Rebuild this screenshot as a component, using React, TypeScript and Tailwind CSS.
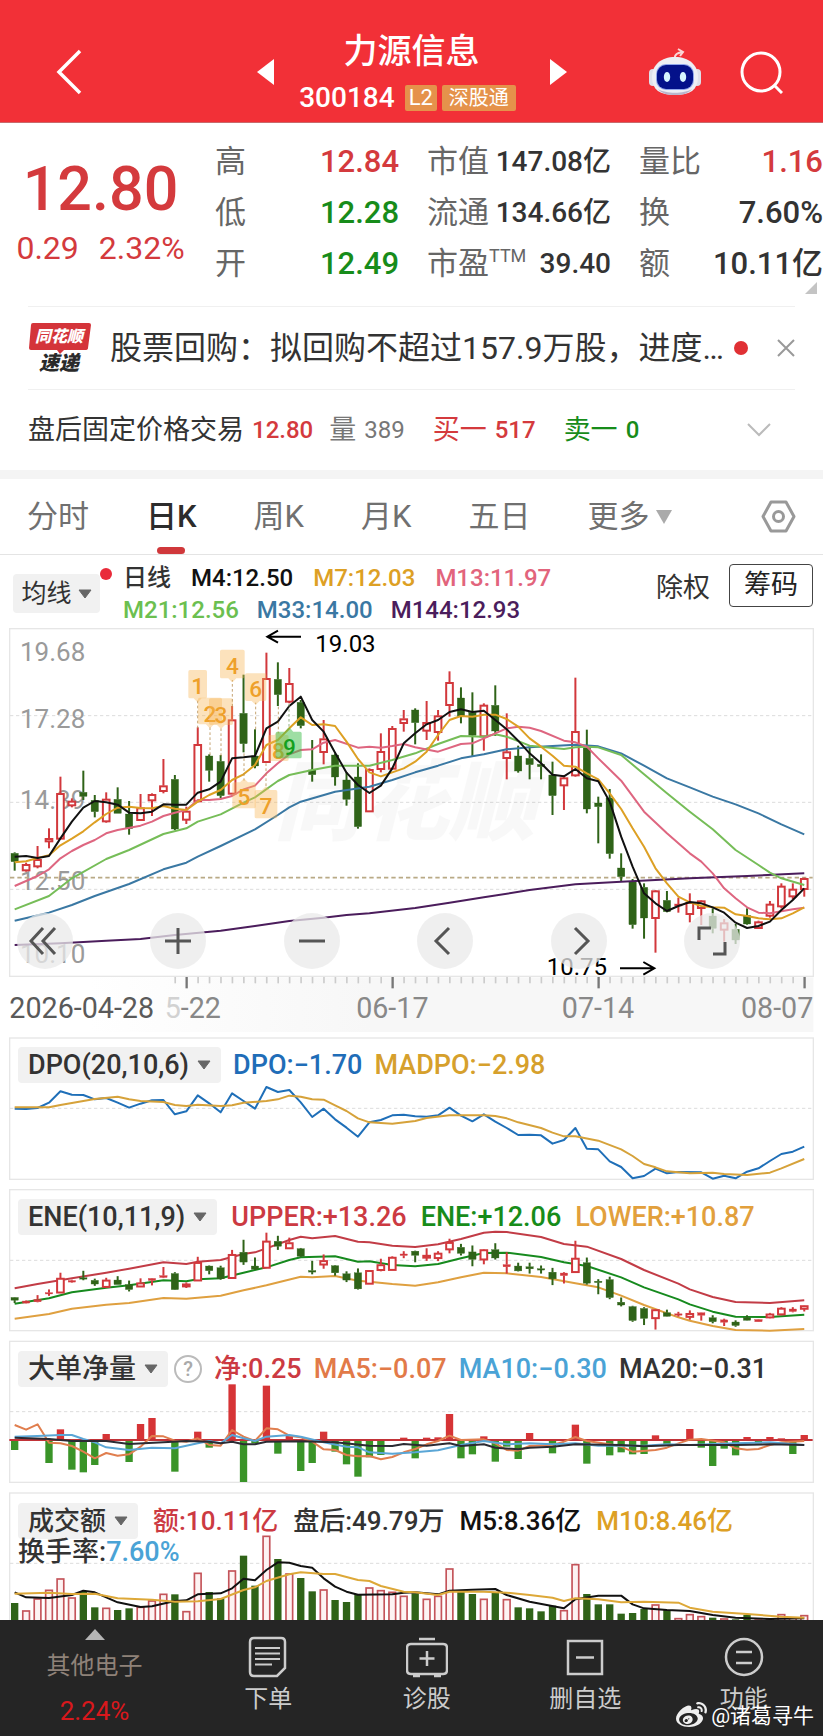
import React from "react";
import { FaWeibo } from "react-icons/fa";

/* All chart drawings share one coordinate system: 2469 units wide, 3 units per CSS pixel at 823px. */
const STEP = 34.33;
const cx = (i: number) => 44 + STEP * i;

type Candle = ["r" | "g", number, number, number, number];

// [direction, high, body top, body bottom, low]
const candles: Candle[] = [
  ["g", 697, 700, 725, 752], ["r", 728, 733, 752, 755], ["r", 678, 718, 740, 745], ["r", 625, 655, 665, 685],
  ["r", 470, 520, 657, 657], ["r", 535, 543, 557, 562], ["g", 452, 517, 529, 540], ["g", 525, 541, 575, 592],
  ["r", 517, 537, 605, 608], ["g", 502, 538, 580, 580], ["g", 543, 582, 626, 644], ["r", 522, 563, 601, 603],
  ["r", 520, 523, 542, 588], ["r", 417, 497, 514, 520], ["g", 465, 478, 627, 630], ["r", 560, 573, 600, 612],
  ["r", 322, 373, 545, 545], ["g", 403, 408, 451, 485], ["g", 405, 424, 527, 535], ["r", 258, 299, 522, 522],
  ["g", 164, 280, 371, 397], ["g", 328, 408, 438, 445], ["r", 98, 175, 427, 427], ["g", 127, 178, 224, 258],
  ["r", 144, 190, 246, 250], ["g", 240, 247, 317, 325], ["g", 360, 450, 464, 485], ["r", 300, 356, 397, 433],
  ["g", 400, 405, 471, 497], ["g", 457, 480, 538, 557], ["g", 430, 471, 620, 626], ["r", 445, 448, 575, 575],
  ["r", 340, 394, 448, 457], ["r", 318, 325, 447, 447], ["r", 270, 296, 310, 335], ["g", 265, 270, 308, 373],
  ["r", 243, 307, 333, 360], ["r", 270, 287, 337, 362], ["r", 154, 187, 256, 290], ["g", 202, 234, 290, 310],
  ["g", 217, 277, 346, 410], ["r", 250, 255, 350, 392], ["g", 196, 256, 333, 348], ["r", 280, 395, 415, 478],
  ["g", 377, 408, 453, 458], ["g", 377, 415, 434, 478], ["g", 403, 433, 440, 478], ["g", 425, 465, 527, 585],
  ["r", 465, 473, 497, 570], ["r", 173, 334, 467, 470], ["g", 329, 377, 567, 580], ["g", 530, 549, 560, 670],
  ["g", 507, 534, 701, 716], ["g", 700, 744, 770, 783], ["g", 777, 785, 914, 926], ["g", 790, 802, 894, 956],
  ["r", 810, 812, 895, 998], ["g", 813, 841, 875, 877], ["r", 833, 852, 858, 878], ["r", 820, 847, 883, 907],
  ["r", 840, 842, 865, 915], ["g", 865, 888, 925, 940], ["r", 897, 908, 930, 965], ["g", 912, 928, 960, 972],
  ["g", 865, 886, 912, 914], ["r", 902, 905, 925, 927], ["r", 843, 852, 888, 893], ["r", 790, 798, 860, 865],
  ["r", 790, 807, 830, 838], ["r", 773, 775, 808, 830],
];

// Series are "index:y" pairs; missing indexes are joined by straight segments.
const M4 = "0:710 1:708 2:714 3:708 4:655 5:605 6:563 7:543 8:547 9:554 10:578 11:580 12:575 13:553 14:554 15:554 16:518 17:508 18:485 19:415 20:412 21:408 22:325 23:305 24:258 25:230 26:300 27:335 28:398 29:458 30:495 31:519 32:497 33:445 34:370 35:340 36:313 37:300 38:276 39:268 40:276 41:272 42:300 43:328 44:362 45:400 46:430 47:464 48:469 49:447 50:475 51:484 52:545 53:650 54:740 55:820 56:850 57:873 58:858 59:846 60:850 61:862 62:878 63:908 64:924 65:918 66:905 67:870 68:840 69:805";
const M7 = "0:727 1:724 2:714 3:706 4:676 5:656 6:634 7:607 8:582 9:563 10:560 11:564 12:565 13:558 14:566 15:570 16:545 17:525 18:510 19:480 20:463 21:435 22:375 23:360 24:325 25:292 26:315 27:313 28:318 29:365 30:417 31:457 32:469 33:457 34:445 35:425 36:395 37:345 38:300 39:288 40:290 41:284 42:284 43:297 44:320 45:355 46:380 47:407 48:437 49:440 50:460 51:478 52:520 53:567 54:625 55:680 56:745 57:790 58:830 59:847 60:858 61:862 62:863 63:883 64:888 65:895 66:898 67:895 68:880 69:862";
const M13 = "0:798 2:768 3:748 4:715 5:693 6:675 7:660 8:640 9:630 11:617 12:605 13:588 14:578 15:570 16:540 17:540 18:537 19:528 20:508 21:497 22:460 23:430 24:403 25:390 26:388 27:368 28:360 30:383 31:380 32:383 33:378 34:372 35:382 37:395 39:372 40:370 41:355 42:340 43:325 44:320 45:323 46:333 48:362 49:367 50:380 51:415 53:482 55:575 57:640 59:700 60:725 61:760 62:805 63:835 64:862 65:878 66:880 68:868 69:863";
const M21 = "0:868 3:828 5:775 8:717 10:690 13:642 15:625 16:605 18:583 20:548 21:532 23:483 24:465 26:450 28:437 31:437 33:420 35:400 37:372 39:348 41:350 42:343 43:350 45:377 48:387 49:382 50:380 51:382 53:405 55:463 57:520 59:575 61:628 63:690 65:735 66:758 67:775 69:795";
const M33 = "0:902 3:878 5:855 7:828 10:792 13:748 15:728 16:710 18:678 21:628 23:585 24:562 25:545 28:515 31:500 33:480 35:457 37:437 39:415 41:403 43:388 45:382 47:378 49:374 51:379 53:400 55:437 57:475 59:502 61:530 63:553 65:580 67:613 69:643";
const M144 = "0:975 4:970 8:962 11:957 14:945 18:932 21:918 24:903 27:893 29:885 31:880 35:864 38:848 41:832 45:810 49:793 53:785 59:775 64:768 69:760";

const DPO = "0:236 1:237 2:234 3:218 4:184 5:194 6:195 7:208 8:204 9:218 10:233 11:221 12:211 13:210 14:253 15:244 16:196 17:220 18:247 19:190 20:213 21:236 22:171 23:186 24:180 25:217 26:261 27:236 28:268 29:293 30:320 31:277 32:270 33:256 34:254 35:259 36:260 37:256 38:233 39:257 40:274 41:253 42:275 43:294 44:315 45:314 46:316 47:341 48:330 49:294 50:356 51:358 52:394 53:411 54:445 55:438 56:416 57:430 58:426 60:427 61:446 62:437 63:445 64:425 65:415 66:393 67:372 68:365 69:350";
const MADPO = "0:232 3:232 4:225 7:207 9:200 10:208 11:213 13:216 14:225 15:228 16:224 18:228 19:226 20:218 22:213 23:208 24:197 25:200 26:208 27:209 28:226 29:243 30:265 31:277 33:281 35:273 36:264 38:256 41:256 42:258 43:265 44:277 46:294 47:308 48:319 49:319 51:332 53:358 54:378 55:402 56:412 57:424 59:430 61:428 62:432 64:435 66:428 67:415 69:387";

const UPPER = "0:775 2:762 5:745 8:728 10:716 13:697 15:702 16:695 18:690 20:672 21:667 22:655 24:630 25:620 26:625 28:618 30:635 31:637 33:647 35:651 37:643 39:627 41:608 42:605 43:606 46:621 48:642 50:650 53:687 55:720 58:761 59:778 61:801 63:816 66:819 69:811";
const ENE = "0:821 3:805 5:787 8:773 10:766 13:751 15:754 16:748 18:745 20:728 22:712 24:690 25:682 28:679 30:695 31:694 33:705 35:709 37:702 39:685 41:669 43:668 46:681 48:697 50:708 53:742 55:772 58:808 59:823 61:845 63:860 66:861 69:854";
const LOWER = "0:866 3:852 5:836 8:824 10:819 13:804 15:806 18:797 20:781 22:766 25:740 26:742 28:738 30:752 31:755 33:762 35:767 37:757 39:742 41:728 43:730 46:741 49:760 51:772 53:797 55:825 58:862 59:872 61:888 63:900 66:902 69:897";

const NET = "0:345 3:384 4:283 5:404 6:412 7:390 8:297 10:381 11:267 12:249 14:410 16:290 17:338 19:148 20:441 21:325 22:152 23:356 24:303 25:408 26:384 27:290 28:350 29:388 30:425 31:367 32:360 34:308 35:370 36:308 37:307 38:237 39:370 40:358 41:304 42:380 43:335 44:372 45:294 47:355 49:269 50:386 52:361 53:352 54:358 55:357 56:301 57:332 59:282 60:338 61:393 62:341 63:361 64:306 65:325 66:306 67:310 68:357 69:300";
const NET5 = "0:270 1:284 2:268 3:323 4:325 5:333 6:350 7:370 8:354 9:362 10:358 11:335 12:303 13:304 14:317 15:320 16:310 17:330 18:332 19:285 20:305 21:318 22:280 23:283 24:302 25:307 26:320 27:343 28:345 29:360 30:364 31:363 32:373 33:366 34:352 35:342 36:328 37:318 38:302 39:315 41:313 42:325 43:345 44:347 45:333 47:330 48:320 49:306 50:318 52:328 53:335 54:350 56:345 57:338 58:325 59:314 60:312 62:322 63:340 64:344 65:342 66:330 67:322 69:318";
const NET10 = "0:305 2:303 4:300 5:300 6:312 7:322 8:337 10:345 12:338 14:340 16:325 17:318 18:325 19:300 20:310 21:318 22:305 24:300 25:305 27:322 29:335 30:337 31:352 33:356 35:352 37:346 39:330 41:318 43:328 45:325 47:328 49:325 51:332 55:332 57:328 59:330 63:325 66:322 69:330";
const NET20 = "0:308 3:312 5:318 8:318 10:327 13:322 15:318 17:320 18:325 19:320 20:328 21:328 22:320 25:319 28:322 31:332 33:333 34:327 36:332 38:325 39:333 41:328 42:338 44:343 45:338 47:335 49:328 53:330 55:334 58:330 61:330 63:330 66:328 69:330";

const amounts = [
  804, 826, 790, 764, 730, 787, 768, 817, 818, 825, 820, 815, 796, 776, 778, 828, 713, 771, 790, 706, 662, 752, 602, 672,
  715, 729, 769, 763, 795, 801, 777, 757, 765, 770, 782, 775, 791, 782, 700, 770, 777, 791, 772, 792, 817, 820, 829, 812,
  825, 687, 777, 808, 808, 836, 834, 822, 808, 825, 849, 837, 843, 848, 850, 853, 840, 853, 850, 837, 847, 840,
];
const A5 = "0:772 1:787 3:789 5:780 6:767 7:772 9:802 11:816 12:814 14:798 15:796 16:778 18:775 19:760 20:731 21:736 22:705 23:682 24:683 25:693 26:698 27:730 28:755 29:770 30:779 33:778 34:773 35:772 37:778 38:767 40:764 42:762 43:780 45:800 48:820 49:793 51:782 53:782 54:808 55:820 57:825 59:828 61:840 63:848 66:852 69:850";
const A10 = "0:776 3:773 5:777 7:776 9:790 12:794 14:800 16:799 18:792 20:765 21:757 22:738 24:718 25:712 27:717 28:717 30:735 31:738 32:753 34:770 35:772 37:780 38:770 41:770 43:773 45:780 47:788 48:798 49:790 51:793 53:802 55:800 58:803 59:818 61:830 64:837 67:845 69:848";

const parse = (s: string) => s.split(" ").map((p) => p.split(":").map(Number) as [number, number]);

function Line({ data, color, width = 6 }: { data: string; color: string; width?: number }) {
  const points = parse(data).map(([i, y]) => `${cx(i)},${y}`).join(" ");
  return <polyline points={points} fill="none" stroke={color} strokeWidth={width} strokeLinejoin="round" />;
}

function Candles({ y }: { y: (v: number) => number }) {
  return (
    <g>
      {candles.map(([kind, high, top, bottom, low], i) => {
        const x = cx(i);
        const color = kind === "r" ? "#d2383c" : "#2f6318";
        const h = y(bottom) - y(top);
        const hollow = kind === "r" && h > 8;
        return (
          <g key={i} stroke={color}>
            <line x1={x} x2={x} y1={y(high)} y2={y(top)} strokeWidth="6" />
            <line x1={x} x2={x} y1={y(bottom)} y2={y(low)} strokeWidth="6" />
            {hollow ? (
              <rect x={x - 10} y={y(top) + 2} width="20" height={Math.max(h - 3, 3)} fill="#fff" strokeWidth="6" />
            ) : (
              <rect x={x - 11} y={y(top)} width="22" height={Math.max(h, 4)} fill={color} strokeWidth="1" />
            )}
          </g>
        );
      })}
    </g>
  );
}

function Frame({ y, h, grid }: { y: number; h: number; grid: number[] }) {
  return (
    <g fill="none">
      <rect x="29" y={y} width="2411" height={h} stroke="#e6e6e6" strokeWidth="4" />
      {grid.map((g) => (
        <line key={g} x1="30" x2="2438" y1={g} y2={g} stroke="#dcdcdc" strokeWidth="3" strokeDasharray="10 8" />
      ))}
    </g>
  );
}

const tags = [
  { n: "1", x: 593, y: 198, t: 155, b: 240, w: 46, to: 325 },
  { n: "2", x: 630, y: 283, t: 238, b: 318, w: 62, to: 405 },
  { n: "3", x: 663, y: 286, t: 240, b: 320, w: 62, to: 408 },
  { n: "4", x: 697, y: 138, t: 94, b: 180, w: 64, to: 260 },
  { n: "5", x: 732, y: 530, t: 482, b: 560, w: 60, to: 400 },
  { n: "6", x: 767, y: 208, t: 165, b: 248, w: 54, to: 328 },
  { n: "7", x: 798, y: 558, t: 505, b: 590, w: 58, to: 430 },
  { n: "8", x: 835, y: 393, t: 340, b: 418, w: 52, to: 260 },
];

function MainChart() {
  const fontFamily = 'Roboto, "Noto Sans CJK SC", sans-serif';
  return (
    <svg viewBox="0 21 2469 1215" className="block w-full [grid-area:1/1]" fontFamily={fontFamily} role="img" aria-label="日K线图">
      <defs>
        <linearGradient id="axis" x1="0" x2="1" y1="0" y2="0">
          <stop offset="0.1" stopColor="#ffffff" />
          <stop offset="0.45" stopColor="#f7f7f7" />
          <stop offset="1" stopColor="#f7f7f7" />
        </linearGradient>
      </defs>
      <rect x="28" y="1072" width="2412" height="164" fill="url(#axis)" />
      <Frame y={26} h={1043} grid={[287, 547, 808]} />
      <text x="822" y="640" fontSize="262" fontWeight="900" fontStyle="italic" fill="#000" opacity="0.025">
        同花顺
      </text>
      <g fontSize="78" fill="#9a9a9a">
        <text x="60" y="124">19.68</text>
        <text x="60" y="325">17.28</text>
        <text x="60" y="567">14.89</text>
        <text x="60" y="809">12.50</text>
        <text x="60" y="1030">10.10</text>
      </g>
      <line x1="30" x2="2438" y1="773" y2="773" stroke="#b9aa86" strokeWidth="5" strokeDasharray="13 9" />
      <Candles y={(v) => v} />
      <Line data={M144} color="#4b1d5c" />
      <Line data={M33} color="#3a78a3" />
      <Line data={M21} color="#76bd58" />
      <Line data={M13} color="#de6680" />
      <Line data={M7} color="#dda024" />
      <Line data={M4} color="#111111" />
      <g fontSize="68" fontWeight="500" textAnchor="middle" fill="#eea02a">
        {tags.map((t) => (
          <g key={t.n}>
            <line x1={t.x} x2={t.x} y1={t.to} y2={t.to > t.b ? t.b : t.t} stroke="#b89055" strokeWidth="2.5" strokeDasharray="8 7" />
            <path
              d={
                t.to > t.b
                  ? `M${t.x - t.w / 2} ${t.t}h${t.w}v${t.b - t.t - 10}h${-t.w / 2 + 10}l-10 10l-10 -10h${-t.w / 2 + 10}z`
                  : `M${t.x - t.w / 2} ${t.t + 10}h${t.w / 2 - 10}l10 -10l10 10h${t.w / 2 - 10}v${t.b - t.t - 10}h${-t.w}z`
              }
              fill="#f8b552"
              stroke="#f8b552"
              strokeWidth="10"
              strokeLinejoin="round"
              opacity="0.38"
            />
            <text x={t.x} y={t.y + 24}>{t.n}</text>
          </g>
        ))}
        <line x1="867" x2="867" y1="252" y2="325" stroke="#7fa06a" strokeWidth="2.5" strokeDasharray="8 7" />
        <path d="M832 340h25l10 -12l10 12h23v70h-68z" fill="#3fbf4c" stroke="#3fbf4c" strokeWidth="10" strokeLinejoin="round" opacity="0.5" />
        <text x="868" y="405" fill="#14a01e">9</text>
      </g>
      <g fill="none" stroke="#000" strokeWidth="6">
        <path d="M903 50H802M834 32L802 50L834 68" />
        <path d="M1860 1045H1963M1930 1026L1963 1045L1930 1064" />
      </g>
      <g fontSize="72" fill="#000">
        <text x="946" y="97">19.03</text>
        <text x="1640" y="1064">10.75</text>
      </g>
      <g>
        {candles.map((_, i) => {
          if (i < 14) return null;
          const major = (i - 15) % 18 === 0;
          return (
            <line key={i} x1={cx(i) + 1} x2={cx(i) + 1} y1="1071" y2={major ? 1105 : 1090} stroke={major ? "#777" : "#ccc"} strokeWidth={major ? 7 : 5} />
          );
        })}
      </g>
      <g fontSize="86" fill="#888">
        <text x="28" y="1194" fill="#5a5a5a">2026-04-28</text>
        <text x="494" y="1194"><tspan fill="#d2d2d2">5</tspan>-22</text>
        <text x="1177" y="1194" textAnchor="middle">06-17</text>
        <text x="1794" y="1194" textAnchor="middle">07-14</text>
        <text x="2440" y="1194" textAnchor="end">08-07</text>
      </g>
    </svg>
  );
}

const controls = [
  { label: "最左", d: "M26 15L14 28L26 41M38 15L26 28L38 41" },
  { label: "放大", d: "M15 28H41M28 15V41" },
  { label: "缩小", d: "M15 28H41" },
  { label: "左移", d: "M32 15L19 28L32 41" },
  { label: "右移", d: "M24 15L37 28L24 41" },
  { label: "全屏", d: "M15 27V15H27M29 41H41V29" },
];

function Caret({ className }: { className: string }) {
  return (
    <svg viewBox="0 0 14 10" className={className} aria-hidden="true">
      <path d="M1 1H13L7 9Z" fill="currentColor" stroke="currentColor" strokeLinejoin="round" />
    </svg>
  );
}

function PickerButton({ children }: { children: React.ReactNode }) {
  return (
    <button className="flex h-9 shrink-0 items-center gap-2 rounded bg-[#f1f1f1] px-[10px] whitespace-nowrap text-[#333]">
      {children}
      <Caret className="w-[14px] text-[#666]" />
    </button>
  );
}

function Panel({ header, children }: { header: React.ReactNode; children: React.ReactNode }) {
  return (
    <section className="grid">
      {children}
      <div className="pt-[15px] pl-[18px] font-medium [grid-area:1/1]">{header}</div>
    </section>
  );
}

type Stat = [label: React.ReactNode, value: string, color: string];

function StatColumn({ rows, size }: { rows: Stat[]; size: string }) {
  return (
    <dl className="min-w-0">
      {rows.map(([label, value, color], i) => (
        <div key={i} className="flex h-[51px] items-center justify-between whitespace-nowrap">
          <dt className="text-[31px] text-[#666]">{label}</dt>
          <dd className={`font-medium ${size} ${color}`}>{value}</dd>
        </div>
      ))}
    </dl>
  );
}

const red = "text-[#d43a3d]";
const green = "text-[#178c1a]";
const dark = "text-[#333]";

export default function App() {
  return (
    <div className="w-full bg-white font-[Roboto,'Noto_Sans_CJK_SC',sans-serif] leading-none text-[#333]">
      <header className="grid grid-cols-[1fr_auto_1fr] items-center border-b border-[#c86a6c] bg-[#f23037] pt-[25px] pb-[3px] text-white">
        <button aria-label="返回" className="ml-14 w-[26px]">
          <svg viewBox="0 0 26 46" className="block w-full" fill="none" stroke="currentColor" strokeWidth="3.5">
            <path d="M24 2L3 23L24 44" />
          </svg>
        </button>
        <div className="flex items-center justify-center">
          <button aria-label="上一只" className="w-[17px]">
            <svg viewBox="0 0 17 26" className="block w-full"><path d="M17 0V26L0 13Z" fill="currentColor" /></svg>
          </button>
          <div className="w-[276px] text-center">
            <h1 className="text-[34px] leading-[52px] font-medium">力源信息</h1>
            <div className="flex h-[42px] items-center justify-center pr-2">
              <span className="mr-[10px] text-[28px] font-medium">300184</span>
              <span className="mr-[5px] rounded-xs bg-[#e5924b] px-1 text-[22px] leading-[26px]">L2</span>
              <span className="rounded-xs bg-[#e5924b] px-[7px] text-[20px] leading-[26px]">深股通</span>
            </div>
          </div>
          <button aria-label="下一只" className="w-[17px]">
            <svg viewBox="0 0 17 26" className="block w-full"><path d="M0 0V26L17 13Z" fill="currentColor" /></svg>
          </button>
        </div>
        <div className="flex items-center justify-end gap-[38px] pr-10">
          <button aria-label="智能助手" className="w-[54px]">
            <svg viewBox="0 0 54 48" className="block w-full">
              <path d="M27 11C26 6 30 5 34 4M30 1L35 4L32 8" fill="none" stroke="#fbd5d6" strokeWidth="2" />
              <rect x="1" y="21" width="8" height="17" rx="4" fill="#dfe0ea" />
              <rect x="45" y="21" width="8" height="17" rx="4" fill="#dfe0ea" />
              <path d="M27 9C41 9 50 17 50 29C50 42 42 47 27 47C12 47 4 42 4 29C4 17 13 9 27 9Z" fill="#eeeef4" />
              <path d="M10 41C18 46 36 46 44 41C40 46 34 47 27 47C20 47 14 46 10 41Z" fill="#b9b6cc" />
              <rect x="8" y="16" width="38" height="26" rx="10" fill="#8fa4ea" />
              <rect x="9" y="17" width="36" height="24" rx="9" fill="#04118a" />
              <ellipse cx="19" cy="29" rx="3.2" ry="5" fill="#d6f4ff" />
              <ellipse cx="35" cy="29" rx="3.2" ry="5" fill="#d6f4ff" />
            </svg>
          </button>
          <button aria-label="搜索" className="w-[43px]">
            <svg viewBox="0 0 43 43" className="block w-full" fill="none" stroke="currentColor" strokeWidth="3">
              <circle cx="21" cy="21" r="19" />
              <path d="M34 34L42 42" />
            </svg>
          </button>
        </div>
      </header>

      <section className="relative grid grid-cols-[187px_1fr_1fr_1fr] gap-7 pt-[13px] pb-[17px]">
        <div className={`pt-5 pl-[14px] text-center whitespace-nowrap ${red}`}>
          <p className="text-[61px] leading-[66px] font-medium">12.80</p>
          <p className="flex justify-center gap-5 text-[32px] leading-[52px]">
            <span>0.29</span>
            <span>2.32%</span>
          </p>
        </div>
        <StatColumn size="text-[31px]" rows={[["高", "12.84", red], ["低", "12.28", green], ["开", "12.49", green]]} />
        <StatColumn
          size="text-[28px]"
          rows={[
            ["市值", "147.08亿", dark],
            ["流通", "134.66亿", dark],
            [<>市盈<sup className="relative -top-3 align-baseline text-[18px]">TTM</sup></>, "39.40", dark],
          ]}
        />
        <StatColumn size="text-[31px]" rows={[["量比", "1.16", red], ["换", "7.60%", dark], ["额", "10.11亿", dark]]} />
        <svg viewBox="0 0 12 12" className="absolute right-1.5 bottom-3 w-3" aria-hidden="true"><path d="M12 0V12H0Z" fill="#c4c4c4" /></svg>
      </section>

      <div className="mx-7 flex h-[83px] items-center border-t border-[#f0f0f0]">
        <svg viewBox="0 0 64 56" className="w-16 shrink-0" role="img" aria-label="同花顺速递">
          <path d="M5 3H61Q63 3 63 5L60 28Q60 30 57 30H36L32 34L29 30H3Q1 30 1 28L3 5Q3 3 5 3Z" fill="#d4343a" />
          <text x="31" y="22" textAnchor="middle" fontSize="16" fontWeight="900" fontStyle="italic" fill="#fff">同花顺</text>
          <text x="31" y="50" textAnchor="middle" fontSize="20" fontWeight="900" fontStyle="italic" fill="#2a2a2a">速递</text>
        </svg>
        <a href="#news" className="ml-[18px] min-w-0 flex-1 truncate text-[32px] leading-[48px]">
          股票回购：拟回购不超过157.9万股，进度...
        </a>
        <span className="ml-2 size-[14px] shrink-0 rounded-full bg-[#e03034]" />
        <button aria-label="关闭" className="ml-[29px] w-[18px] shrink-0">
          <svg viewBox="0 0 18 18" className="block w-full" stroke="#999" strokeWidth="2"><path d="M1 1L17 17M17 1L1 17" /></svg>
        </button>
      </div>

      <div className="mx-7 flex h-[81px] items-center border-t border-[#f0f0f0] text-[27px] whitespace-nowrap">
        <span>盘后固定价格交易</span>
        <span className={`ml-2 text-[24px] font-medium ${red}`}>12.80</span>
        <span className="ml-4 text-[#777]">量</span>
        <span className="ml-2 text-[24px] text-[#777]">389</span>
        <span className={`ml-7 ${red}`}>买一</span>
        <span className={`ml-2 text-[24px] font-medium ${red}`}>517</span>
        <span className={`ml-7 ${green}`}>卖一</span>
        <span className={`ml-2 text-[24px] font-medium ${green}`}>0</span>
        <button aria-label="展开" className="mr-6 ml-auto w-6">
          <svg viewBox="0 0 24 14" className="block w-full" fill="none" stroke="#bbb" strokeWidth="2"><path d="M1 1L12 12L23 1" /></svg>
        </button>
      </div>

      <nav className="flex h-[85px] items-stretch gap-[57px] border-t-[9px] border-b border-t-[#f4f4f4] border-b-[#e4e4e4] pr-[27px] pl-[27px] text-[31px] whitespace-nowrap text-[#707070]">
        <button>分时</button>
        <button className="relative font-medium text-[#2c2c2c]">
          日K
          <span className="absolute bottom-0 left-1/2 h-[7px] w-7 -translate-x-1/2 rounded-sm bg-[#d0383b]" />
        </button>
        <button>周K</button>
        <button>月K</button>
        <button>五日</button>
        <button className="flex items-center gap-1.5">
          更多
          <svg viewBox="0 0 16 14" className="w-4" aria-hidden="true"><path d="M0 0H16L8 14Z" fill="#aaa" /></svg>
        </button>
        <button aria-label="设置" className="ml-auto w-[35px]">
          <svg viewBox="0 0 35 33" className="block w-full" fill="none" stroke="#999" strokeWidth="3" strokeLinejoin="round">
            <path d="M10 2H25L33 16.500L25 31H10L2 16.500Z" />
            <circle cx="17.500" cy="16.500" r="5" />
          </svg>
        </button>
      </nav>

      <div className="flex h-[72px] items-start pr-[10px] pl-[13px]">
        <button className="relative mt-[19px] flex h-[39px] w-[87px] shrink-0 items-center justify-center gap-[6px] rounded bg-[#f1f1f1] text-[25px]">
          均线
          <Caret className="w-[14px] text-[#666]" />
          <span className="absolute -top-1.5 -right-3 size-3 rounded-full bg-[#e92b3a]" />
        </button>
        <div className="ml-[23px] pt-[7px] text-[24px] leading-[32px] font-medium whitespace-nowrap">
          <p className="flex gap-5">
            <span>日线</span>
            <span className="text-[#111]">M4:12.50</span>
            <span className="text-[#dda024]">M7:12.03</span>
            <span className="text-[#e2647c]">M13:11.97</span>
          </p>
          <p className="flex gap-[18px]">
            <span className="text-[#6cbf50]">M21:12.56</span>
            <span className="text-[#3a78a3]">M33:14.00</span>
            <span className="text-[#4b1d5c]">M144:12.93</span>
          </p>
        </div>
        <button className="mt-5 ml-auto text-[27px]">除权</button>
        <button className="mt-[9px] ml-[19px] h-[43px] w-[84px] rounded border border-[#444] text-[27px] text-[#222]">筹码</button>
      </div>

      <section className="grid">
        <MainChart />
        <div className="mb-[63px] flex justify-between self-end pr-[83px] pl-[17px] [grid-area:1/1]">
          {controls.map((c) => (
            <button key={c.label} aria-label={c.label} className="size-14 rounded-full bg-[#e9e9e9]/75">
              <svg viewBox="0 0 56 56" className="block w-full" fill="none" stroke="#555" strokeWidth="3"><path d={c.d} /></svg>
            </button>
          ))}
        </div>
      </section>

      <Panel
        header={
          <div className="flex items-center gap-3 text-[27px] whitespace-nowrap">
            <PickerButton>DPO(20,10,6)</PickerButton>
            <span className="text-[#1f6db8]">DPO:−1.70</span>
            <span className="text-[#d6a02c]">MADPO:−2.98</span>
          </div>
        }
      >
        <svg viewBox="0 6 2469 456" className="block w-full [grid-area:1/1]" role="img" aria-label="DPO">
          <Frame y={24} h={424} grid={[235]} />
          <Line data={DPO} color="#1f6fb8" />
          <Line data={MADPO} color="#d6a23a" />
        </svg>
      </Panel>

      <Panel
        header={
          <div className="flex items-center gap-[14px] text-[27px] whitespace-nowrap">
            <PickerButton>ENE(10,11,9)</PickerButton>
            <span className="text-[#cc3a42]">UPPER:+13.26</span>
            <span className="text-[#178c1a]">ENE:+12.06</span>
            <span className="text-[#e2a03c]">LOWER:+10.87</span>
          </div>
        }
      >
        <svg viewBox="0 462 2469 456" className="block w-full [grid-area:1/1]" role="img" aria-label="ENE">
          <Frame y={479} h={423} grid={[691]} />
          <Line data={UPPER} color="#c23c46" />
          <Line data={ENE} color="#168a1e" />
          <Line data={LOWER} color="#dfa040" />
          <Candles y={(v) => 608 + (v - 98) * 0.323} />
        </svg>
      </Panel>

      <Panel
        header={
          <div className="flex items-center gap-3 text-[27px] whitespace-nowrap">
            <div className="flex items-center gap-1.5">
              <PickerButton>大单净量</PickerButton>
              <button aria-label="说明" className="size-7 rounded-full border-2 border-[#bbb] text-[20px] text-[#aaa]">?</button>
            </div>
            <span className="text-[#cc3a42]">净:0.25</span>
            <span className="text-[#e27a48]">MA5:−0.07</span>
            <span className="text-[#4aa3d6]">MA10:−0.30</span>
            <span className="text-[#333]">MA20:−0.31</span>
          </div>
        }
      >
        <svg viewBox="0 3 2469 456" className="block w-full [grid-area:1/1]" role="img" aria-label="大单净量">
          <Frame y={19} h={423} grid={[230]} />
          {parse(NET).map(([i, y]) => (
            <rect key={i} x={cx(i) - 11} width="22" y={Math.min(y, 315)} height={Math.abs(y - 315)} fill={y < 315 ? "#d63436" : "#3a9428"} />
          ))}
          <line x1="28" x2="2438" y1="315" y2="315" stroke="#c23338" strokeWidth="6" />
          <Line data={NET5} color="#e07e4e" />
          <Line data={NET10} color="#5aa6d6" />
          <Line data={NET20} color="#2b2b33" />
        </svg>
      </Panel>

      <Panel
        header={
          <>
            <div className="flex items-center gap-[15px] text-[26px] whitespace-nowrap">
              <PickerButton>成交额</PickerButton>
              <span className="text-[#cc3a42]">额:10.11亿</span>
              <span className="text-[#333]">盘后:49.79万</span>
              <span className="text-[#111]">M5:8.36亿</span>
              <span className="text-[#dda024]">M10:8.46亿</span>
            </div>
            <p className="text-[27px] leading-[26px]">
              换手率:<span className="text-[#4aa3d6]">7.60%</span>
            </p>
          </>
        }
      >
        <svg viewBox="0 459 2469 396" className="block w-full [grid-area:1/1]" role="img" aria-label="成交额">
          <Frame y={474} h={424} grid={[685]} />
          {amounts.map((y, i) =>
            candles[i][0] === "r" ? (
              <rect key={i} x={cx(i) - 10} width="20" y={y + 2} height={900 - y} fill="#fdf3f3" stroke="#c4545a" strokeWidth="5" />
            ) : (
              <rect key={i} x={cx(i) - 11} width="22" y={y} height={900 - y} fill="#2f6318" />
            ),
          )}
          <Line data={A5} color="#111111" />
          <Line data={A10} color="#dda838" />
        </svg>
      </Panel>

      <footer className="relative grid h-[116px] grid-cols-[189px_1fr_1fr_1fr_1fr] bg-[#252525] text-[24px] text-[#ccc]">
        <button className="flex flex-col items-center pt-[9px]">
          <svg viewBox="0 0 20 11" className="w-5" aria-hidden="true"><path d="M10 0L20 11H0Z" fill="#b5b5b5" /></svg>
          <span className="mt-3 leading-7 text-[#8f8279]">其他电子</span>
          <span className="mt-[17px] text-[26px] leading-7 text-[#d8181c]">2.24%</span>
        </button>
        <button className="flex flex-col items-center pt-4">
          <svg viewBox="0 0 42 42" className="w-[42px]" fill="none" stroke="currentColor" strokeWidth="2.500">
            <path d="M7 2H34Q38 2 38 6V32L30 40H7Q3 40 3 36V6Q3 2 7 2Z" />
            <path d="M8 12H33M8 17.500H33M8 23H33M8 28.500H25" strokeWidth="2" />
          </svg>
          <span className="mt-[7px] leading-7">下单</span>
        </button>
        <button className="flex flex-col items-center pt-4">
          <svg viewBox="0 0 42 42" className="w-[42px]" fill="none" stroke="currentColor" strokeWidth="2.500">
            <path d="M13 3H29M5 8H37Q41 8 41 12V34Q41 38 37 38H5Q1 38 1 34V12Q1 8 5 8Z" />
            <path d="M7 40H14M28 40H35M21 15V30M13.500 22.500H28.500" />
          </svg>
          <span className="mt-[7px] leading-7">诊股</span>
        </button>
        <button className="flex flex-col items-center pt-4">
          <svg viewBox="0 0 42 42" className="w-[42px]" fill="none" stroke="currentColor" strokeWidth="2.500">
            <path d="M4 5H38V38H4ZM12 21.500H30" />
          </svg>
          <span className="mt-[7px] leading-7">删自选</span>
        </button>
        <button className="flex flex-col items-center pt-4">
          <svg viewBox="0 0 42 42" className="w-[42px]" fill="none" stroke="currentColor" strokeWidth="2.500">
            <circle cx="21" cy="21" r="18" />
            <path d="M13 16H29M13 27H29" />
          </svg>
          <span className="mt-[7px] leading-7">功能</span>
        </button>
        <span className="absolute right-[9px] bottom-[5px] flex items-center gap-1 text-[21px] leading-[30px] text-white">
          <FaWeibo className="size-[31px] text-[#eee]" />
          @诸葛寻牛
        </span>
      </footer>
    </div>
  );
}
